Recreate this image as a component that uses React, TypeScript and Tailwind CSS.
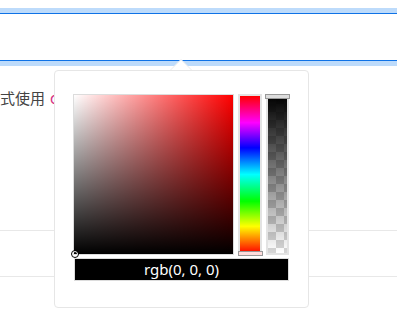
import React from "react";

export default function App() {
  return (
    <div className="relative w-[397px] h-[320px] overflow-hidden bg-white" style={{ fontFamily: '"Noto Sans", "Noto Sans CJK SC", sans-serif' }}>
      {/* focused input */}
      <div className="pt-[13px]">
        <div className="mx-[-10px] h-[48px] border-y border-[#0f72e6] bg-white shadow-[0_0_0_5px_#bddbfb]" />
      </div>
      {/* text line */}
      <div className="mt-[26px] h-[22px] flex items-center whitespace-nowrap text-[15px] leading-[22px] text-[#444]" style={{ fontFamily: '"Noto Sans CJK SC", sans-serif' }}>
        式使用 <span className="ml-[5px] text-[#d63384]">code</span>
      </div>
      {/* table lines */}
      <div className="mt-[121px] h-[47px] border-y border-[#e8e8e8]" />

      {/* arrow */}
      <svg className="absolute left-[169px] top-[58px]" width="24" height="14" viewBox="0 0 24 14">
        <polygon points="0.5,13 12,1.5 23.5,13" fill="#fff" stroke="#ececec" strokeWidth="1" />
        <rect x="0" y="12.5" width="24" height="2" fill="#fff" />
      </svg>

      {/* popover */}
      <div className="absolute left-[54px] top-[70px] w-[255px] h-[238px] rounded-[4px] border border-[#e6e6e6] bg-white pl-[18px] pt-[23px]">
        <div className="flex items-start">
          {/* saturation */}
          <div className="relative w-[161px] h-[161px] border border-[#dcdcdc]">
            <div className="absolute inset-0 bg-[#ff0000]" />
            <div className="absolute inset-0 bg-[linear-gradient(to_right,#fff,rgba(255,255,255,0))]" />
            <div className="absolute inset-0 bg-[linear-gradient(to_top,#000,rgba(0,0,0,0))]" />
            <div className="absolute left-[-3px] bottom-[-4px] w-[8px] h-[8px] rounded-full border-[1.5px] border-black bg-transparent shadow-[inset_0_0_0_1px_#fff]" />
          </div>
          {/* hue */}
          <div className="relative ml-[4px] w-[24px] h-[161px] border-2 border-[#e3e3e3]">
            <div className="absolute inset-0 bg-[linear-gradient(to_bottom,#f00,#f0f_17%,#00f_33%,#0ff_50%,#0f0_67%,#ff0_83%,#f00)]" />
            <div className="absolute left-[-2px] bottom-[-3px] w-[25px] h-[5px] border border-[#999] bg-[#fdd]" />
          </div>
          {/* alpha */}
          <div className="relative ml-[4px] w-[23px] h-[161px] border-2 border-[#e3e3e3]">
            <div className="absolute inset-0 bg-[conic-gradient(#d6d6d6_25%,#fff_0_50%,#d6d6d6_0_75%,#fff_0)] bg-[length:16px_16px]" />
            <div className="absolute inset-0 bg-[linear-gradient(to_bottom,#000,rgba(0,0,0,0))]" />
            <div className="absolute left-[-3px] top-[-2px] w-[25px] h-[5px] border border-[#999] bg-[#ddd]" />
          </div>
        </div>
        <div className="mt-[3px] ml-[1px] w-[215px] h-[23px] border border-[#dcdcdc] bg-black flex items-center justify-center text-white text-[15px] leading-none">
          rgb(0, 0, 0)
        </div>
      </div>
    </div>
  );
}
